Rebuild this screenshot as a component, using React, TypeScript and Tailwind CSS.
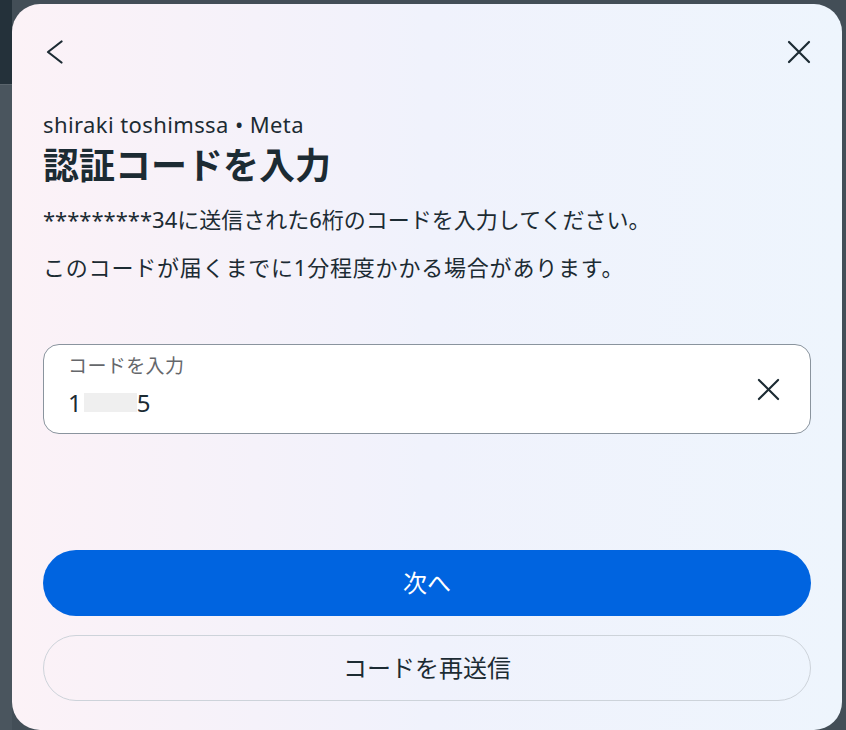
import React from "react";

const font = { fontFamily: '"Noto Sans", "Noto Sans CJK JP", sans-serif' };

const BackIcon = () => (
  <svg width="24" height="24" viewBox="0 0 24 24" fill="none">
    <path d="M18.5 1.5L5 12l13.5 10.5" stroke="#1c2b33" strokeWidth="2.2" strokeLinecap="round" strokeLinejoin="round" />
  </svg>
);

const CloseIcon = ({ size = 24 }: { size?: number }) => (
  <svg width={size} height={size} viewBox="0 0 24 24" fill="none">
    <path d="M2 2l20 20M22 2L2 22" stroke="#1c2b33" strokeWidth="2.2" strokeLinecap="round" />
  </svg>
);

const App: React.FC = () => {
  return (
    <div className="relative h-[730px] w-[846px] overflow-hidden bg-[#434e57]" style={font}>
      {/* page behind the dialog */}
      <div className="flex h-full w-[12px] flex-col">
        <div className="h-[84px] bg-[#24313a]" />
        <div className="flex-1 border-t border-[#5a646c] bg-[#4a555e]" />
      </div>

      <div className="absolute left-[12px] top-[4px] flex h-[726px] w-[830px] flex-col rounded-[28px] bg-gradient-to-r from-[#fcf2f7] via-[#f0f2fc] to-[#eef5fd] px-[31px] pt-[36px] text-[#1c2b33]">
        <div className="flex h-[24px] items-center justify-between">
          <BackIcon />
          <CloseIcon />
        </div>

        <p className="mt-[48px] text-[22px] leading-[24px] tracking-[0.4px]">shiraki toshimssa • Meta</p>
        <h1 className="mt-[8px] text-[36px] font-bold leading-[44px]">認証コードを入力</h1>
        <p className="mt-[15px] text-[22px] leading-[32px]">*********34に送信された6桁のコードを入力してください。</p>
        <p className="mt-[16px] text-[22px] leading-[32px] tracking-[0.8px]">このコードが届くまでに1分程度かかる場合があります。</p>

        <div className="mt-[61px] flex h-[90px] items-center justify-between rounded-[16px] border border-[#8a949e] bg-white pl-[24px] pr-[30px]">
          <div className="flex flex-col pb-[8px]">
            <span className="text-[19px] leading-[24px] tracking-[0.4px] text-[#65676b]">コードを入力</span>
            <span className="mt-[11px] flex items-center text-[24px] leading-[28px]">
              1
              <span className="ml-[2px] inline-block h-[19px] w-[53px] bg-[#efefef]" />
              5
            </span>
          </div>
          <CloseIcon size={23} />
        </div>

        <button className="mt-[116px] h-[66px] w-full rounded-full bg-[#0064e0] text-[24px] text-white">
          次へ
        </button>
        <button className="mt-[19px] h-[66px] w-full rounded-full border border-[#cdd3da] text-[24px] text-[#1c2b33]">
          コードを再送信
        </button>
      </div>
    </div>
  );
};

export default App;
